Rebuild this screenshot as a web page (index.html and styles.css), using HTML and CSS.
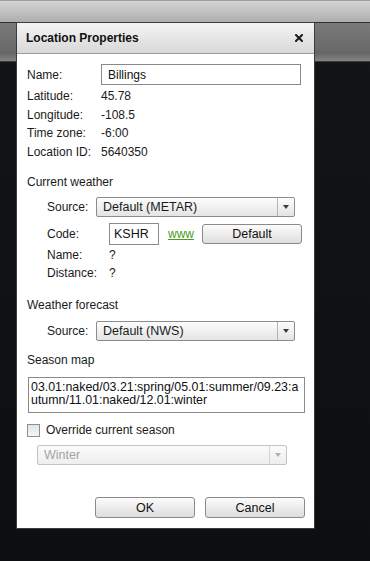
FILE: index.html
```html
<!DOCTYPE html>
<html lang="en">
<head>
    <meta charset="UTF-8">
    <meta name="viewport" content="width=device-width, initial-scale=1.0">
    <title>Location Properties</title>
    <link rel="stylesheet" href="styles.css">
</head>
<body>
    <!-- App chrome behind the modal -->
    <div class="app-topbar"></div>
    <div class="app-toolbar"></div>
    <div class="app-canvas"></div>

    <div class="dialog">
        <div class="titlebar">
            <span class="title">Location Properties</span>
            <svg class="close" width="8" height="8" viewBox="0 0 8 8">
                <path d="M1 1L7 7M7 1L1 7" stroke="#1a1a1a" stroke-width="2" stroke-linecap="square"/>
            </svg>
        </div>

        <div class="dialog-body">
            <div class="row name-row">
                <span class="lbl">Name:</span>
                <input class="text-input name-input" type="text" value="Billings">
            </div>

            <div class="info">
                <div class="info-row"><span class="lbl">Latitude:</span>45.78</div>
                <div class="info-row"><span class="lbl">Longitude:</span>-108.5</div>
                <div class="info-row"><span class="lbl">Time zone:</span>-6:00</div>
                <div class="info-row"><span class="lbl">Location ID:</span>5640350</div>
            </div>

            <!-- Current weather -->
            <div class="section-title first">Current weather</div>
            <div class="row sub-row">
                <span class="sub-lbl">Source:</span>
                <div class="select">
                    <span class="select-text">Default (METAR)</span>
                    <span class="select-arrow"></span>
                </div>
            </div>
            <div class="row code-row">
                <span class="code-lbl">Code:</span>
                <input class="text-input code-input" type="text" value="KSHR">
                <a class="www" href="#">www</a>
                <button class="btn btn-default" type="button">Default</button>
            </div>
            <div class="station">
                <div class="info-row"><span class="code-lbl">Name:</span>?</div>
                <div class="info-row"><span class="code-lbl">Distance:</span>?</div>
            </div>

            <!-- Weather forecast -->
            <div class="section-title forecast">Weather forecast</div>
            <div class="row sub-row">
                <span class="sub-lbl">Source:</span>
                <div class="select">
                    <span class="select-text">Default (NWS)</span>
                    <span class="select-arrow"></span>
                </div>
            </div>

            <!-- Season map -->
            <div class="section-title season">Season map</div>
            <textarea class="season-map">03.01:naked/03.21:spring/05.01:summer/09.23:autumn/11.01:naked/12.01:winter</textarea>

            <label class="check-row">
                <span class="checkbox"></span>
                Override current season
            </label>
            <div class="select disabled season-select">
                <span class="select-text">Winter</span>
                <span class="select-arrow"></span>
            </div>

            <div class="actions">
                <button class="btn" type="button">OK</button>
                <button class="btn" type="button">Cancel</button>
            </div>
        </div>
    </div>
</body>
</html>
```

FILE: styles.css
```css
body {
    margin: 0;
    padding: 0;
    font-family: "Liberation Sans", Arial, sans-serif;
    font-size: 12px;
    color: #1a1a1a;
    background-color: #0f1011;
}

.app-topbar {
    height: 21px;
    border-top: 1px solid #9aa0a6;
    background: linear-gradient(#d4d4d4, #aeaeae);
    border-bottom: 1px solid #2e2e2e;
}

.app-toolbar {
    height: 38px;
    background: linear-gradient(#7a7a7a, #676767 80%, #858585);
    border-bottom: 1px solid #3a3a3a;
}

.app-canvas {
    height: 500px;
    background: linear-gradient(#131415, #0d0e0f);
}

/* modal dialog lies over the app */
.dialog {
    position: absolute;
    left: 16px;
    top: 22px;
    width: 297px;
    border: 1px solid #3c3c3c;
    background: #ffffff;
}

.titlebar {
    height: 30px;
    padding: 0 11px 0 9px;
    display: flex;
    align-items: center;
    justify-content: space-between;
    background: linear-gradient(#f4f4f4, #d8d8d8);
    border-bottom: 1px solid #9c9c9c;
}

.title {
    font-weight: bold;
    font-size: 12px;
    color: #111;
}

.dialog-body {
    padding: 10px 9px 10px 10px;
}

.row {
    display: flex;
    align-items: center;
}

.lbl {
    display: inline-block;
    width: 74px;
}

.text-input {
    box-sizing: border-box;
    margin: 0;
    padding: 0 4px;
    border: 1px solid #8a8a8a;
    font-family: inherit;
    font-size: 12px;
    color: #111;
    background: #fff;
    outline: none;
}

.name-input {
    width: 200px;
    height: 21px;
    padding-left: 6px;
}

.info {
    margin-top: 2px;
}

.info-row {
    line-height: 18.5px;
}

.section-title {
    line-height: 18px;
}

.section-title.first {
    margin-top: 12px;
}

.section-title.forecast {
    margin-top: 14px;
}

.section-title.season {
    margin-top: 10px;
}

.sub-row {
    margin-top: 6px;
    padding-left: 20px;
}

.forecast + .sub-row {
    margin-top: 7px;
}

.sub-lbl {
    width: 49px;
}

.code-lbl {
    display: inline-block;
    width: 62px;
}

.select {
    box-sizing: border-box;
    width: 199px;
    height: 20px;
    display: flex;
    align-items: center;
    border: 1px solid #8c8c8c;
    border-radius: 2px;
    background: linear-gradient(#fdfdfd, #e4e4e4);
}

.select-text {
    flex: 1;
    padding-left: 6px;
    font-size: 12.5px;
}

.select-arrow {
    width: 16px;
    height: 100%;
    border-left: 1px solid #b4b4b4;
    position: relative;
}

.select-arrow::after {
    content: "";
    position: absolute;
    left: 5px;
    top: 7px;
    border-left: 3.5px solid transparent;
    border-right: 3.5px solid transparent;
    border-top: 4px solid #3c3c3c;
}

.select.disabled {
    border-color: #c4c4c4;
    background: linear-gradient(#fbfbfb, #eeeeee);
}

.select.disabled .select-text {
    color: #a3a3a3;
}

.select.disabled .select-arrow {
    border-left-color: #d4d4d4;
}

.select.disabled .select-arrow::after {
    border-top-color: #b0b0b0;
}

.code-row {
    margin-top: 6px;
    padding-left: 20px;
}

.code-input {
    width: 50px;
    height: 22px;
    padding-left: 4px;
    font-size: 12.5px;
}

.www {
    margin-left: 9px;
    margin-right: 8px;
    color: #4b9a1c;
    text-decoration: underline;
}

.btn {
    box-sizing: border-box;
    width: 100px;
    height: 21px;
    margin: 0;
    padding: 0;
    border: 1px solid #8a8a8a;
    border-radius: 3px;
    font-family: inherit;
    font-size: 12.5px;
    color: #111;
    background: linear-gradient(#fbfbfb, #dedede);
}

.btn-default {
    height: 20px;
}

.station {
    margin-top: 1px;
    padding-left: 20px;
}

.station .info-row {
    line-height: 18px;
}

.season-map {
    display: block;
    box-sizing: border-box;
    width: 277px;
    height: 36px;
    margin: 8px 0 0 1px;
    padding: 3px 0 3px 2px;
    border: 1px solid #8a8a8a;
    font-family: inherit;
    font-size: 12.4px;
    line-height: 13px;
    color: #111;
    word-break: break-all;
    overflow-wrap: anywhere;
    resize: none;
    overflow: hidden;
    outline: none;
}

.check-row {
    margin-top: 8px;
    display: flex;
    align-items: center;
    gap: 6px;
    line-height: 18px;
}

.checkbox {
    box-sizing: border-box;
    width: 13px;
    height: 13px;
    border: 1px solid #8e8e8e;
    background: linear-gradient(#e4e4e4, #f6f6f6);
}

.season-select {
    width: 250px;
    margin: 6px 0 0 10px;
}

.actions {
    margin-top: 32px;
    display: flex;
    justify-content: flex-end;
    gap: 10px;
}
```
